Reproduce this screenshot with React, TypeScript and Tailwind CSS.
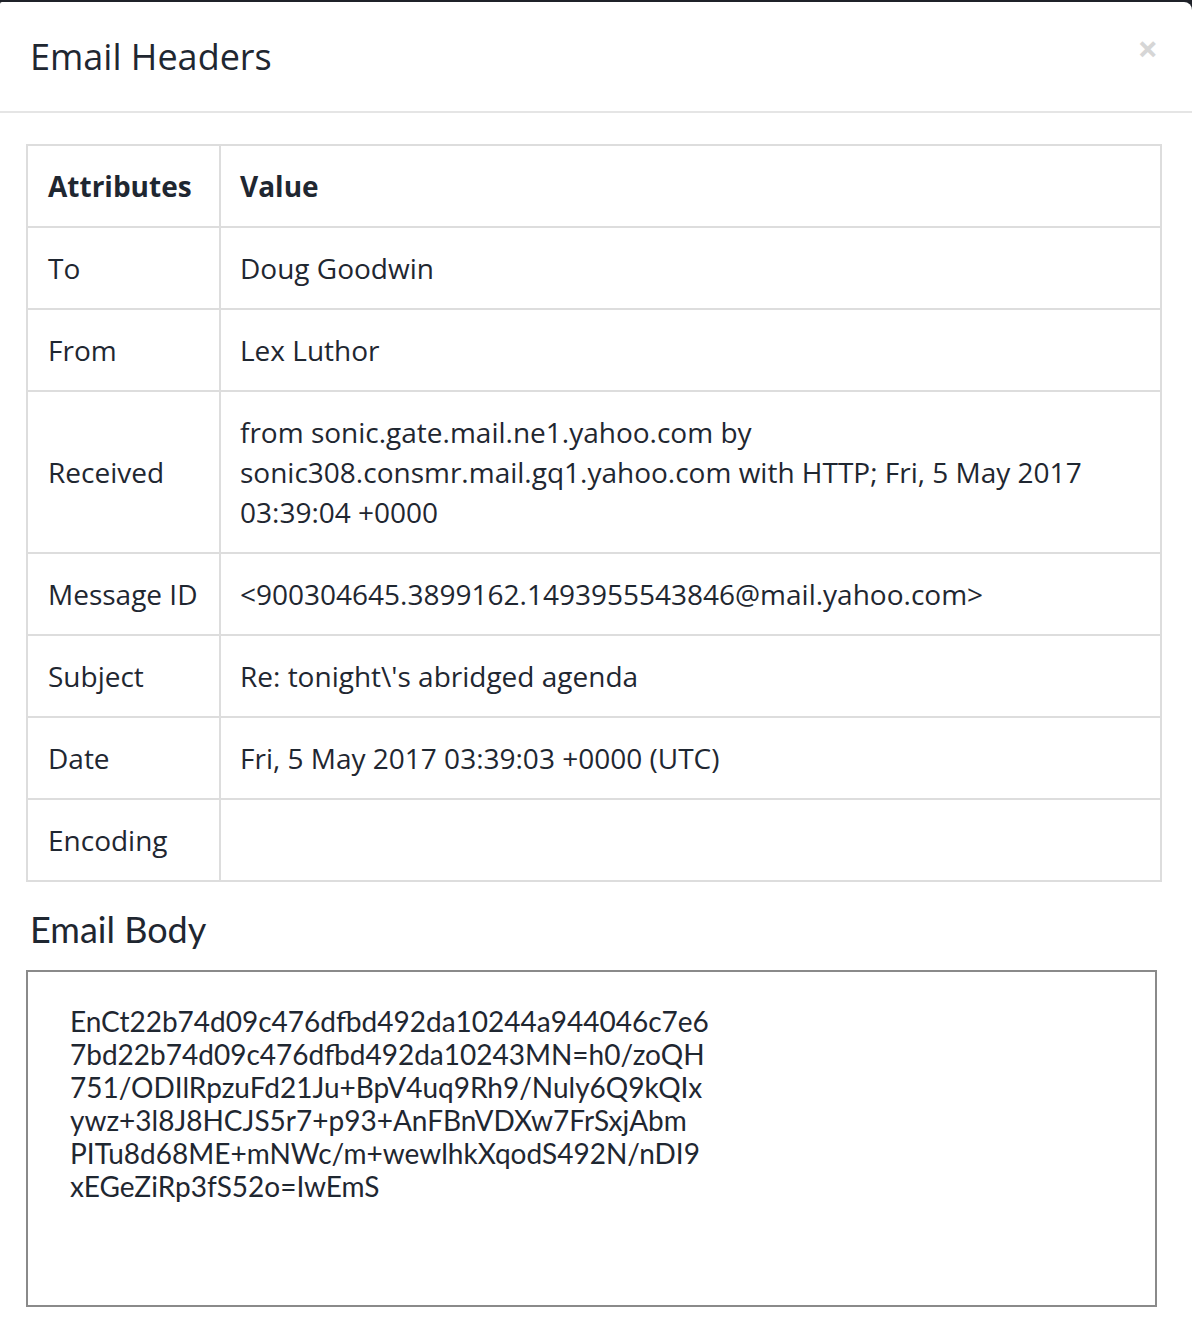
import React from "react";

const rows: { k: string; v: React.ReactNode }[] = [
  { k: "To", v: "Doug Goodwin" },
  { k: "From", v: "Lex Luthor" },
  {
    k: "Received",
    v: (
      <>
        from sonic.gate.mail.ne1.yahoo.com by
        <br />
        sonic308.consmr.mail.gq1.yahoo.com with HTTP; Fri, 5 May 2017
        <br />
        03:39:04 +0000
      </>
    ),
  },
  { k: "Message ID", v: "<900304645.3899162.1493955543846@mail.yahoo.com>" },
  { k: "Subject", v: "Re: tonight\\'s abridged agenda" },
  { k: "Date", v: "Fri, 5 May 2017 03:39:03 +0000 (UTC)" },
  { k: "Encoding", v: "" },
];

const body = [
  "EnCt22b74d09c476dfbd492da10244a944046c7e6",
  "7bd22b74d09c476dfbd492da10243MN=h0/zoQH",
  "751/ODIlRpzuFd21Ju+BpV4uq9Rh9/Nuly6Q9kQIx",
  "ywz+3l8J8HCJS5r7+p93+AnFBnVDXw7FrSxjAbm",
  "PITu8d68ME+mNWc/m+wewlhkXqodS492N/nDI9",
  "xEGeZiRp3fS52o=IwEmS",
];

export default function App() {
  return (
    <div className="w-[1192px] h-[1326px] bg-[#1f2229] pt-[2px] overflow-hidden">
      <div className="bg-white rounded-tr-[8px] rounded-tl-[2px] h-full text-[#1f2731]">
        <div className="h-[111px] flex items-center justify-between pl-[30px] pr-[34px] border-b-2 border-[#e5e5e5]">
          <h1 className="text-[36px] font-['Open_Sans',sans-serif] font-normal">Email Headers</h1>
          <span className="text-[#d6d6d6] text-[36px] font-bold font-['Open_Sans',sans-serif] leading-none -mt-[16px]">×</span>
        </div>
        <div className="px-[26px] pt-[31px]">
          <table className="w-[1136px] border-collapse border-2 border-[#dddddd] font-['Open_Sans',sans-serif] text-[28px] leading-[40px]">
            <thead>
              <tr>
                <th className="w-[193px] border-2 border-[#dddddd] text-left font-bold pl-[20px] py-[20px]">Attributes</th>
                <th className="border-2 border-[#dddddd] text-left font-bold pl-[19px] py-[20px]">Value</th>
              </tr>
            </thead>
            <tbody>
              {rows.map((r) => (
                <tr key={r.k}>
                  <td className="border-2 border-[#dddddd] pl-[20px] py-[20px] align-middle">{r.k}</td>
                  <td className="border-2 border-[#dddddd] pl-[19px] py-[20px] align-middle">{r.v || "\u00a0"}</td>
                </tr>
              ))}
            </tbody>
          </table>
          <h2 className="font-['Lato',sans-serif] text-[36px] mt-[25px] pl-[4px] leading-[44px]">Email Body</h2>
          <div className="mt-[19px] w-[1131px] h-[337px] border-2 border-[#8a8a8a] pl-[42px] pt-[33px] font-['Lato',sans-serif] text-[28px] leading-[33px]">
            {body.map((l) => (
              <div key={l}>{l}</div>
            ))}
          </div>
        </div>
      </div>
    </div>
  );
}
